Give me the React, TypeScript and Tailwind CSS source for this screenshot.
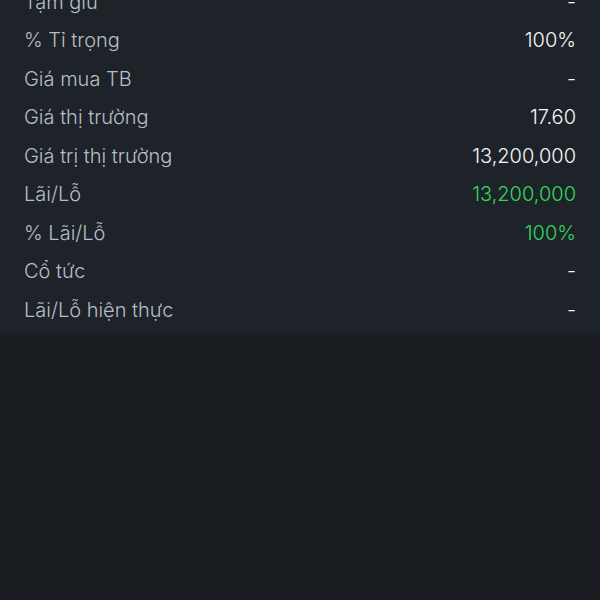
import React from 'react';

type Row = { label: string; value: string; green?: boolean };

const rows: Row[] = [
  { label: 'Tạm giữ', value: '-' },
  { label: '% Tỉ trọng', value: '100%' },
  { label: 'Giá mua TB', value: '-' },
  { label: 'Giá thị trường', value: '17.60' },
  { label: 'Giá trị thị trường', value: '13,200,000' },
  { label: 'Lãi/Lỗ', value: '13,200,000', green: true },
  { label: '% Lãi/Lỗ', value: '100%', green: true },
  { label: 'Cổ tức', value: '-' },
  { label: 'Lãi/Lỗ hiện thực', value: '-' },
];

export default function App() {
  return (
    <div
      className="w-[600px] h-[600px] overflow-hidden bg-[#1a1e23]"
      style={{ fontFamily: 'Inter, "Noto Sans", sans-serif' }}
    >
      <div className="bg-[#1e232a] -mt-[17.5px] pb-[3.5px] px-6">
        {rows.map((r, i) => (
          <div key={i} className="h-[38.5px] flex items-center justify-between text-[20px] font-light">
            <span className="text-[#b8bec5]">{r.label}</span>
            <span className={r.green ? 'text-[#34d65c]' : 'text-[#f5f6f7]'}>{r.value}</span>
          </div>
        ))}
      </div>
    </div>
  );
}
